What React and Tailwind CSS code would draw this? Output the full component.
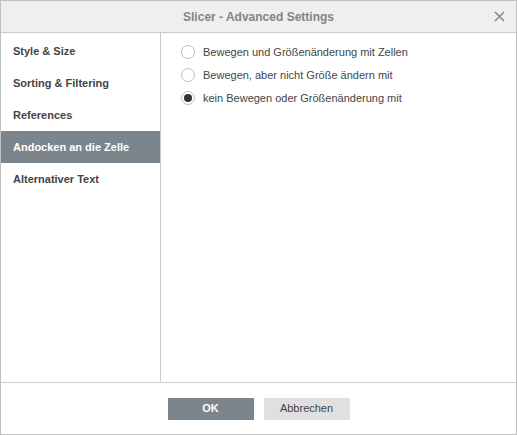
import { useState } from "react";

const tabs = [
  "Style & Size",
  "Sorting & Filtering",
  "References",
  "Andocken an die Zelle",
  "Alternativer Text",
];

const options = [
  "Bewegen und Größenänderung mit Zellen",
  "Bewegen, aber nicht Größe ändern mit",
  "kein Bewegen oder Größenänderung mit",
];

function Radio({ checked }) {
  return (
    <span className="w-[14px] h-[14px] rounded-full border border-[#c0c0c0] bg-white flex items-center justify-center shrink-0">
      {checked && <span className="w-[8px] h-[8px] rounded-full bg-[#333]" />}
    </span>
  );
}

export default function App() {
  const [tab, setTab] = useState(3);
  const [choice, setChoice] = useState(2);

  return (
    <div
      className="w-[517px] h-[435px] bg-white border border-[#c0c0c0] flex flex-col text-[11px] text-[#444]"
      style={{ fontFamily: '"Liberation Sans", Arial, sans-serif' }}
    >
      {/* Header */}
      <div className="h-[32px] bg-[#efefef] border-b border-[#cbcbcb] flex items-center justify-center relative shrink-0">
        <span className="text-[12px] font-bold text-[#848484]">Slicer - Advanced Settings</span>
        <svg className="absolute right-[11px] top-[10px]" width="11" height="11" viewBox="0 0 11 11">
          <path d="M1 1 L10 10 M10 1 L1 10" stroke="#888" strokeWidth="1.5" />
        </svg>
      </div>

      {/* Body */}
      <div className="flex flex-1 border-b border-[#cbcbcb]">
        <div className="w-[160px] border-r border-[#cbcbcb] pt-[2px] shrink-0">
          {tabs.map((t, i) => (
            <div
              key={t}
              onClick={() => setTab(i)}
              className={`h-[32px] flex items-center pl-[12px] font-bold cursor-pointer ${
                tab === i ? "bg-[#7d858c] text-white" : "text-[#444]"
              }`}
            >
              {t}
            </div>
          ))}
        </div>
        <div className="flex-1 pl-[20px] pt-[12px] flex flex-col gap-[9px]">
          {options.map((o, i) => (
            <label
              key={o}
              onClick={() => setChoice(i)}
              className="flex items-center gap-[8px] h-[14px] cursor-pointer"
            >
              <Radio checked={choice === i} />
              <span>{o}</span>
            </label>
          ))}
        </div>
      </div>

      {/* Footer */}
      <div className="h-[51px] flex items-center justify-center gap-[10px] shrink-0">
        <button className="w-[86px] h-[22px] bg-[#7d858c] text-white font-bold text-[11px]">OK</button>
        <button className="w-[86px] h-[22px] bg-[#e0e0e0] text-[#444] text-[11px]">Abbrechen</button>
      </div>
    </div>
  );
}
